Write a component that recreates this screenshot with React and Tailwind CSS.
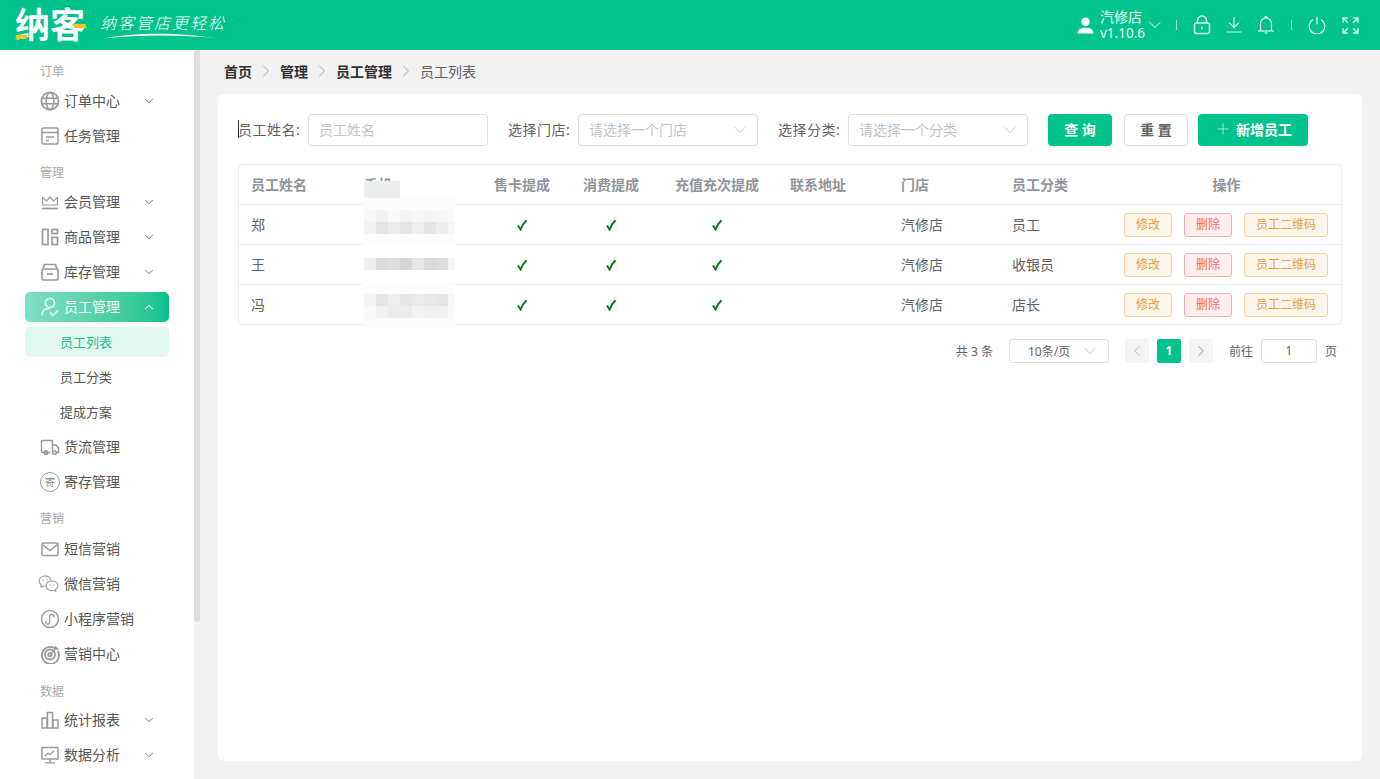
import React from 'react';
import { ChevronDown, ChevronUp, ChevronRight, ChevronLeft, Plus } from 'lucide-react';

const Svg = ({ children, className = 'w-[20px] h-[20px] text-[#9a9a9a]', box = '0 0 20 20' }) => (
  <svg viewBox={box} fill="none" stroke="currentColor" strokeWidth="1.5" className={className}>
    {children}
  </svg>
);

const icons = {
  globe: (
    <Svg>
      <circle cx="10" cy="10" r="8.6" strokeWidth="1.8" />
      <ellipse cx="10" cy="10" rx="3.8" ry="8.6" />
      <path d="M1.6 7.3h16.8M1.6 12.7h16.8" />
    </Svg>
  ),
  task: (
    <Svg>
      <rect x="2" y="2" width="16" height="16" rx="1.5" />
      <path d="M2 6.500h16M6 11h8M6 14.500h3" />
    </Svg>
  ),
  crown: (
    <Svg>
      <path d="M2.500 5.500l4 3.500L10 5l3.500 4 4-3.500V13h-15z" strokeWidth="1.200" />
      <path d="M2 16.500h16" strokeWidth="1.800" />
    </Svg>
  ),
  goods: (
    <Svg>
      <rect x="2.500" y="2.500" width="5.500" height="15" strokeWidth="1.700" />
      <rect x="12" y="2.500" width="5.500" height="4" strokeWidth="1.700" />
      <rect x="12" y="10.500" width="5.500" height="7" strokeWidth="1.700" />
    </Svg>
  ),
  stock: (
    <Svg>
      <path d="M3 7l1.500-4.500h11L17 7" strokeWidth="1.700" />
      <rect x="2" y="7" width="16" height="11" rx="1.500" strokeWidth="1.700" />
      <path d="M7 12h6" strokeWidth="1.700" />
    </Svg>
  ),
  staff: (
    <Svg className="w-[22px] h-[22px] text-[#eafaf5]" box="0 0 22 22">
      <circle cx="11" cy="6.500" r="5" strokeWidth="1.700" />
      <path d="M2 20c0-5 4-7.500 9-7.500M11 17l3 3.500 6-6" strokeWidth="1.700" />
    </Svg>
  ),
  truck: (
    <Svg>
      <path d="M10.500 15.500H2.500a1 1 0 0 1-1-1v-10a1 1 0 0 1 1-1h10v12M12.500 8h3.500l2.500 3v4.500h-2" />
      <circle cx="6" cy="15.500" r="1.800" />
      <circle cx="14.500" cy="15.500" r="1.800" />
    </Svg>
  ),
  mail: (
    <Svg>
      <rect x="2" y="4" width="16" height="12.500" rx="1" />
      <path d="M2.500 5.500L10 11.500l7.500-6" />
    </Svg>
  ),
  wechat: (
    <Svg className="w-[22px] h-[20px] -ml-[2px] text-[#9a9a9a]" box="0 0 22 20">
      <path d="M13 6.500C12.500 3.800 10 2 7 2 3.700 2 1 4.200 1 7c0 1.700 1 3 2.300 4L3 13l2.200-1c.6.200 1.200.300 1.800.300" strokeWidth="1.100" />
      <path d="M14 7c-3.300 0-6 2-6 4.800s2.700 4.800 6 4.800c.7 0 1.300-.100 1.900-.300l2 1-.300-1.800c1.400-.900 2.400-2.200 2.400-3.700C20 9 17.300 7 14 7z" strokeWidth="1.100" />
      <circle cx="5" cy="6" r=".7" fill="currentColor" stroke="none" />
      <circle cx="9" cy="6" r=".7" fill="currentColor" stroke="none" />
      <circle cx="12" cy="11" r=".7" fill="currentColor" stroke="none" />
      <circle cx="16" cy="11" r=".7" fill="currentColor" stroke="none" />
    </Svg>
  ),
  mini: (
    <Svg>
      <circle cx="10" cy="10" r="8.500" />
      <path d="M6 12.200a2 2 0 1 0 3.700 1V7a2 2 0 1 1 4 1.300" strokeWidth="1.300" />
    </Svg>
  ),
  target: (
    <Svg>
      <path d="M15.500 4.600A8.500 8.500 0 1 0 17.700 7" strokeWidth="1.800" />
      <circle cx="10" cy="10.500" r="5" strokeWidth="1.800" />
      <circle cx="10" cy="10.500" r="1.800" strokeWidth="1.600" />
      <path d="M10 10.500L17 3.500M15.500 2v3h3" strokeWidth="1.300" />
    </Svg>
  ),
  chart: (
    <Svg>
      <rect x="2" y="8" width="5" height="10" />
      <rect x="7.500" y="2.500" width="5" height="15.500" />
      <rect x="13" y="10" width="5" height="8" />
    </Svg>
  ),
  monitor: (
    <Svg>
      <rect x="2" y="2.500" width="16" height="11.500" />
      <path d="M10 14v3.500M5 17.800h10M5 11l3-3 2 1.500L14 6" strokeWidth="1.300" />
    </Svg>
  ),
  deposit: (
    <span className="w-[20px] h-[20px] rounded-full border-[1.5px] border-[#9a9a9a] flex items-center justify-center text-[10px] leading-none text-[#8a8a8a]">
      寄
    </span>
  ),
};

const Caret = ({ up }) =>
  up ? (
    <ChevronUp className="w-[14px] h-[14px] text-white ml-auto mr-[13px]" strokeWidth={1.8} />
  ) : (
    <ChevronDown className="w-[14px] h-[14px] text-[#666] ml-auto mr-[13px]" strokeWidth={1.5} />
  );

const MenuItem = ({ icon, label, caret }) => (
  <div className="h-[30px] mb-[5px] mx-[25px] pl-[15px] flex items-center rounded-[5px] text-[14px] text-[#555]">
    <span className="w-[20px] flex justify-center">{icons[icon]}</span>
    <span className="ml-[4px] -mt-[1px]">{label}</span>
    {caret && <Caret />}
  </div>
);

const GroupLabel = ({ children, className = 'h-[31px] pt-[2px]' }) => (
  <div className={`${className} pl-[40px] flex items-center text-[12px] text-[#a8a8a8]`}>{children}</div>
);

const Sidebar = () => (
  <aside className="w-[200px] shrink-0 bg-white flex overflow-hidden">
    <div className="flex-1 w-[194px] pt-[5px]">
      <GroupLabel>订单</GroupLabel>
      <MenuItem icon="globe" label="订单中心" caret />
      <MenuItem icon="task" label="任务管理" />
      <GroupLabel>管理</GroupLabel>
      <MenuItem icon="crown" label="会员管理" caret />
      <MenuItem icon="goods" label="商品管理" caret />
      <MenuItem icon="stock" label="库存管理" caret />
      <div className="h-[30px] mb-[5px] mx-[25px] pl-[15px] flex items-center rounded-[5px] text-[14px] text-white bg-gradient-to-r from-[#7fe0c5] to-[#00c28b]">
        <span className="w-[20px] flex justify-center">{icons.staff}</span>
        <span className="ml-[4px] -mt-[1px]">员工管理</span>
        <Caret up />
      </div>
      <div className="h-[30px] mb-[5px] mx-[25px] pl-[35px] pt-[1px] flex items-center rounded-[5px] text-[13px] text-[#22bb8e] bg-[#e3f7f0]">
        员工列表
      </div>
      <div className="h-[30px] mb-[5px] mx-[25px] pl-[35px] pt-[1px] flex items-center text-[13px] text-[#555]">员工分类</div>
      <div className="h-[30px] mb-[5px] mx-[25px] pl-[35px] pt-[1px] flex items-center text-[13px] text-[#555]">提成方案</div>
      <MenuItem icon="truck" label="货流管理" />
      <MenuItem icon="deposit" label="寄存管理" />
      <GroupLabel className="h-[32px] pt-[2px]">营销</GroupLabel>
      <MenuItem icon="mail" label="短信营销" />
      <MenuItem icon="wechat" label="微信营销" />
      <MenuItem icon="mini" label="小程序营销" />
      <MenuItem icon="target" label="营销中心" />
      <GroupLabel className="h-[31px] pt-[5px]">数据</GroupLabel>
      <MenuItem icon="chart" label="统计报表" caret />
      <MenuItem icon="monitor" label="数据分析" caret />
    </div>
    <div className="w-[6px] shrink-0 bg-[#f1f1f1]">
      <div className="h-[572px] bg-[#dedede] rounded-b-[3px]" />
    </div>
  </aside>
);

const Header = () => (
  <header className="h-[50px] shrink-0 bg-[#00c28b] flex items-center text-white">
    <div className="ml-[15px] relative text-[35px] leading-[50px] font-bold w-[85px]">
      纳客
      <span className="absolute left-[1px] top-[35px] w-[11px] h-[4px] bg-[#f5c518] -skew-x-[20deg]" />
      <span className="absolute left-[59px] top-[24px] w-[12px] h-[4px] bg-[#f5c518] skew-x-[20deg]" />
    </div>
    <div className="relative w-[128px] h-[50px]">
      <div className="text-[16px] leading-[46px] tracking-[2px] italic font-light whitespace-nowrap">纳客管店更轻松</div>
      <svg viewBox="0 0 120 8" className="absolute left-[3px] top-[31px] w-[118px] h-[10px]" fill="none">
        <path d="M0 6.500C30 1 70 -1 118 6.500C75 2 35 3 0 6.500z" fill="#fff" />
      </svg>
    </div>

    <div className="ml-auto flex items-center">
      <svg viewBox="0 0 16 16" className="w-[17px] h-[17px]" fill="currentColor">
        <circle cx="8" cy="4.500" r="4" />
        <path d="M0.500 15.500c0-4 3-5.500 7.500-5.500s7.500 1.500 7.500 5.500z" />
      </svg>
      <div className="ml-[6px] w-[46px] text-[13.500px] leading-[17px] text-[#f0fffa]">
        <div className="text-[14px] -mt-[1px]">汽修店</div>
        <div>v1.10.6</div>
      </div>
      <ChevronDown className="w-[20px] h-[20px] -ml-[1px]" strokeWidth={1.1} />
      <span className="w-px h-[10px] bg-[#9fe6d1] ml-[11px]" />
      <Svg className="w-[18px] h-[20px] ml-[16px] text-[#d5f5ec]" box="0 0 18 20">
        <rect x="1.500" y="8" width="15" height="10.500" rx="2" />
        <path d="M4.500 8V5.500a4.500 4.500 0 0 1 9 0V8M9 11.500v3" />
      </Svg>
      <Svg className="w-[18px] h-[18px] ml-[14px] text-[#d5f5ec]" box="0 0 18 18">
        <path d="M9 1v10M4 6.500L9 11.500l5-5M1.500 16h15" strokeWidth="1.200" />
      </Svg>
      <Svg className="w-[18px] h-[20px] ml-[14px] text-white" box="0 0 18 20">
        <path d="M1 16h16M3.500 16V8.500a5.500 5.500 0 0 1 11 0V16M7.800 2.500a1.300 1.300 0 0 1 2.400 0M7.500 18h3" strokeWidth="1.200" />
      </Svg>
      <span className="w-px h-[10px] bg-[#9fe6d1] ml-[16px]" />
      <Svg className="w-[18px] h-[18px] ml-[16px] text-[#eafaf5]" box="0 0 18 18">
        <path d="M5 3.500a7.800 7.800 0 1 0 8 0M9 0.800v7.500" strokeWidth="1.200" />
      </Svg>
      <Svg className="w-[17px] h-[17px] ml-[16px] mr-[21px] text-[#d5f5ec]" box="0 0 16 16">
        <path d="M1 5.500V1h4.500M1 1l4.500 4.500M15 5.500V1h-4.500M15 1l-4.500 4.500M1 10.500V15h4.500M1 15l4.500-4.500M15 10.500V15h-4.500M15 15l-4.500-4.500" strokeWidth="1.300" />
      </Svg>
    </div>
  </header>
);

const Field = ({ label, placeholder, select, className = '' }) => (
  <div className={`flex items-center ${className}`}>
    <span className="text-[14px] text-[#606266] w-[70px] whitespace-nowrap tracking-[0.5px] -mt-[2px]">{label}</span>
    <div className="w-[180px] h-[32px] border border-[#dcdfe6] rounded-[4px] pl-[10px] pr-[7px] flex items-center bg-white text-[14px] text-[#c0c4cc]">
      <span className="-mt-[2px]">{placeholder}</span>
      {select && <ChevronDown className="ml-auto w-[20px] h-[20px] text-[#c0c4cc]" strokeWidth={1.1} />}
    </div>
  </div>
);

const cols = 'grid grid-cols-[113px_126px_88px_90px_122px_111px_111px_112px_229px]';

const rows = [
  { name: '郑', kind: '员工' },
  { name: '王', kind: '收银员' },
  { name: '冯', kind: '店长' },
];

const Check = () => (
  <svg viewBox="0 0 12 12" className="w-[12px] h-[12px] mx-auto" fill="none">
    <path d="M2 6.500L4.600 10.500C6 6.500 8 3.500 10.500 1.200" stroke="#0a7d14" strokeWidth="2" />
  </svg>
);

const Tag = ({ red, wide, children }) => (
  <span
    className={`h-[24px] rounded-[3px] border flex items-center justify-center text-[12px] ${wide ? 'w-[84px]' : 'w-[48px]'} ${
      red ? 'bg-[#feeeee] border-[#fbb0b0] text-[#f56c6c]' : 'bg-[#fdf6ec] border-[#f6d39c] text-[#e6a23c]'
    }`}
  >
    {children}
  </span>
);

const mosaic = [
  { top: 45, cells: ['#f8f8f8', '#f2f2f2', '#f8f9f9', '#f3f4f5', '#f7f7f7', '#f4f5f6', '#f6f6f4', '#fbfbfb'] },
  { top: 57, cells: ['#f1f2f2', '#e6e5e4', '#ebebea', '#e4e5e6', '#efefef', '#e4e4e4', '#ededeb', '#f6f7f8'] },
  { top: 93, cells: ['#eef0ef', '#dcdbda', '#dcdde0', '#d6d6d5', '#e5e7e6', '#d8d9dc', '#dcdcdc', '#f2f3f4'] },
  { top: 129, cells: ['#f5f5f5', '#e6e6e6', '#eeeeee', '#e6e6e8', '#eaeaea', '#e8e8e8', '#e6e6e6', '#f8f8f8'] },
  { top: 141, cells: ['#fafafa', '#f2f2f2', '#ececec', '#ececed', '#f3f3f3', '#f1f1f1', '#f2f2f2', '#fafafa'] },
];

const Table = () => (
  <div className="relative mt-[18px] border border-[#ebeef5] rounded-[4px] h-[161px] text-[14px]">
    <div className={`${cols} h-[40px] items-center font-bold text-[#909399] border-b border-[#ebeef5]`}>
      <div className="pl-[12px]">员工姓名</div>
      <div className="pl-[12px]">手机</div>
      <div className="text-center">售卡提成</div>
      <div className="text-center">消费提成</div>
      <div className="text-center">充值充次提成</div>
      <div className="pl-[12px]">联系地址</div>
      <div className="pl-[12px]">门店</div>
      <div className="pl-[12px]">员工分类</div>
      <div className="text-center">操作</div>
    </div>
    {rows.map((r, i) => (
      <div key={r.name} className={`${cols} h-[40px] items-center text-[#606266] border-b ${i < 2 ? 'border-[#ebeef5]' : 'border-transparent'}`}>
        <div className="pl-[12px]">{r.name}</div>
        <div />
        <Check />
        <Check />
        <Check />
        <div />
        <div className="pl-[12px]">汽修店</div>
        <div className="pl-[12px]">{r.kind}</div>
        <div className="pl-[12px] flex gap-[12px]">
          <Tag>修改</Tag>
          <Tag red>删除</Tag>
          <Tag wide>员工二维码</Tag>
        </div>
      </div>
    ))}

    {/* 手机号打码 */}
    <div className="absolute left-[125px] top-[16px] w-[36px] h-[18px] bg-[#eceded]" />
    <div className="absolute left-[124px] top-[33px] w-[92px] h-[47px] bg-[#fcfcfc]" />
    <div className="absolute left-[124px] top-[117px] w-[92px] h-[45px] bg-[#fcfcfc]" />
    {mosaic.map((m) => (
      <div key={m.top} className="absolute left-[125px] flex" style={{ top: m.top }}>
        {m.cells.map((c, j) => (
          <span key={j} className={`h-[12px] ${j === 7 ? 'w-[7px]' : 'w-[12px]'}`} style={{ background: c }} />
        ))}
      </div>
    ))}
  </div>
);

const Pager = () => (
  <div className="mt-[14px] pr-[5px] flex items-center justify-end text-[12px] text-[#606266]">
    <span className="pt-[2px]">共 3 条</span>
    <div className="ml-[16px] w-[100px] h-[24px] border border-[#dcdfe6] rounded-[3px] flex items-center pl-[18px] pr-[8px]">
      <span className="pt-[1px]">10条/页</span>
      <ChevronDown className="ml-auto w-[20px] h-[20px] text-[#c0c4cc]" strokeWidth={1.1} />
    </div>
    <span className="ml-[16px] w-[24px] h-[24px] rounded-[2px] bg-[#f4f4f5] flex items-center justify-center">
      <ChevronLeft className="w-[18px] h-[18px] text-[#b5b8bf]" strokeWidth={1.2} />
    </span>
    <span className="ml-[8px] w-[24px] h-[24px] rounded-[2px] bg-[#00c28b] text-white font-bold flex items-center justify-center">1</span>
    <span className="ml-[8px] w-[24px] h-[24px] rounded-[2px] bg-[#f4f4f5] flex items-center justify-center">
      <ChevronRight className="w-[18px] h-[18px] text-[#8f9298]" strokeWidth={1.2} />
    </span>
    <span className="ml-[16px] pt-[2px]">前往</span>
    <span className="ml-[8px] w-[56px] h-[24px] border border-[#dcdfe6] rounded-[3px] flex items-center justify-center">1</span>
    <span className="ml-[8px] pt-[2px]">页</span>
  </div>
);

const Sep = () => <ChevronRight className="w-[20px] h-[20px] mx-[4px] text-[#a8abb2]" strokeWidth={1.2} />;

const App = () => (
  <div
    className="h-screen w-full flex flex-col overflow-hidden bg-[#f2f2f2]"
    style={{ fontFamily: '"Noto Sans", "Noto Sans CJK SC", sans-serif' }}
  >
    <Header />
    <div className="flex flex-1 min-h-0">
      <Sidebar />
      <main className="flex-1 px-[18px] min-w-0">
        <div className="h-[44px] pl-[6px] pb-[2px] flex items-center text-[14px] text-[#303133] font-bold">
          <span>首页</span>
          <Sep />
          <span>管理</span>
          <Sep />
          <span>员工管理</span>
          <Sep />
          <span className="font-normal text-[#606266]">员工列表</span>
        </div>
        <div className="h-[667px] bg-white rounded-[6px] p-[20px]">
          <div className="flex items-center relative">
            <span className="absolute left-0 top-[6px] w-px h-[18px] bg-[#303133]" />
            <Field label="员工姓名:" placeholder="员工姓名" />
            <Field label="选择门店:" placeholder="请选择一个门店" select className="ml-[20px]" />
            <Field label="选择分类:" placeholder="请选择一个分类" select className="ml-[20px]" />
            <button className="ml-[20px] w-[64px] h-[32px] pb-[2px] rounded-[4px] bg-[#00c28b] text-white text-[14px] font-bold">查 询</button>
            <button className="ml-[12px] w-[64px] h-[32px] pb-[2px] rounded-[4px] border border-[#dcdfe6] bg-white text-[#606266] text-[14px] font-bold">重 置</button>
            <button className="ml-[10px] w-[110px] h-[32px] pb-[2px] rounded-[4px] bg-[#00c28b] text-white text-[14px] font-bold flex items-center justify-center gap-[4px]">
              <Plus className="w-[18px] h-[18px] text-[#a5ecd6]" strokeWidth={1.3} />
              新增员工
            </button>
          </div>
          <Table />
          <Pager />
        </div>
      </main>
    </div>
  </div>
);

export default App;
